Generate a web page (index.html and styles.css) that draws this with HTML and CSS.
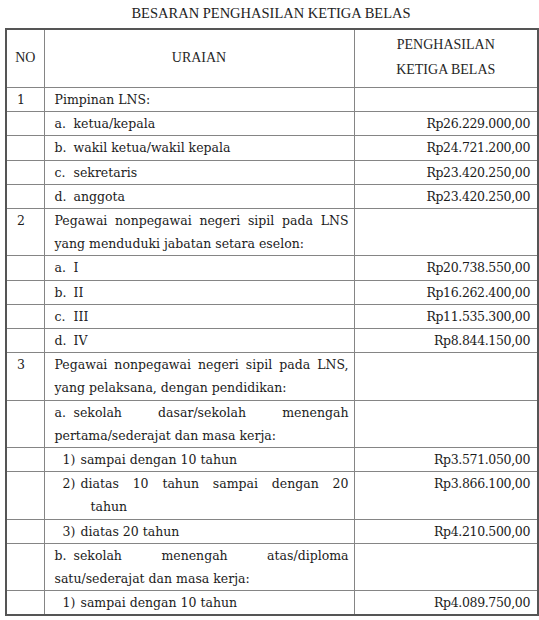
FILE: index.html
```html
<!DOCTYPE html>
<html lang="id">
<head>
<meta charset="utf-8">
<title>Besaran Penghasilan Ketiga Belas</title>
<link rel="stylesheet" href="styles.css">
</head>
<body>
<div class="page">
  <h1 class="title">BESARAN PENGHASILAN KETIGA BELAS</h1>
  <table class="tbl">
    <colgroup><col class="c-no"><col class="c-ur"><col class="c-amt"></colgroup>
    <thead>
      <tr><th class="h-no">NO</th><th class="h-ur">URAIAN</th><th class="h-amt">PENGHASILAN<br>KETIGA BELAS</th></tr>
    </thead>
    <tbody>
      <tr><td class="no">1</td><td class="ur">Pimpinan LNS:</td><td class="amt"></td></tr>
      <tr><td class="no"></td><td class="ur"><span class="mk">a.</span>ketua/kepala</td><td class="amt">Rp26.229.000,00</td></tr>
      <tr><td class="no"></td><td class="ur"><span class="mk">b.</span>wakil ketua/wakil kepala</td><td class="amt">Rp24.721.200,00</td></tr>
      <tr><td class="no"></td><td class="ur"><span class="mk">c.</span>sekretaris</td><td class="amt">Rp23.420.250,00</td></tr>
      <tr><td class="no"></td><td class="ur"><span class="mk">d.</span>anggota</td><td class="amt">Rp23.420.250,00</td></tr>
      <tr><td class="no">2</td><td class="ur"><span class="jl">Pegawai nonpegawai negeri sipil pada LNS</span>yang menduduki jabatan setara eselon:</td><td class="amt"></td></tr>
      <tr><td class="no"></td><td class="ur"><span class="mk">a.</span>I</td><td class="amt">Rp20.738.550,00</td></tr>
      <tr><td class="no"></td><td class="ur"><span class="mk">b.</span>II</td><td class="amt">Rp16.262.400,00</td></tr>
      <tr><td class="no"></td><td class="ur"><span class="mk">c.</span>III</td><td class="amt">Rp11.535.300,00</td></tr>
      <tr><td class="no"></td><td class="ur"><span class="mk">d.</span>IV</td><td class="amt">Rp8.844.150,00</td></tr>
      <tr><td class="no">3</td><td class="ur"><span class="jl">Pegawai nonpegawai negeri sipil pada LNS,</span>yang pelaksana, dengan pendidikan:</td><td class="amt"></td></tr>
      <tr><td class="no"></td><td class="ur"><span class="jl"><span class="mk">a.</span>sekolah dasar/sekolah menengah</span>pertama/sederajat dan masa kerja:</td><td class="amt"></td></tr>
      <tr><td class="no"></td><td class="ur"><div class="sub"><span class="mk2">1)</span>sampai dengan 10 tahun</div></td><td class="amt">Rp3.571.050,00</td></tr>
      <tr><td class="no"></td><td class="ur"><div class="sub"><span class="jl"><span class="mk2">2)</span>diatas 10 tahun sampai dengan 20</span><span class="cont">tahun</span></div></td><td class="amt">Rp3.866.100,00</td></tr>
      <tr><td class="no"></td><td class="ur"><div class="sub"><span class="mk2">3)</span>diatas 20 tahun</div></td><td class="amt">Rp4.210.500,00</td></tr>
      <tr><td class="no"></td><td class="ur"><span class="jl"><span class="mk">b.</span>sekolah menengah atas/diploma</span>satu/sederajat dan masa kerja:</td><td class="amt"></td></tr>
      <tr><td class="no"></td><td class="ur"><div class="sub"><span class="mk2">1)</span>sampai dengan 10 tahun</div></td><td class="amt">Rp4.089.750,00</td></tr>
    </tbody>
  </table>
</div>
</body>
</html>
```

FILE: styles.css
```css
html, body {
  margin: 0;
  padding: 0;
  background: #ffffff;
}

.page {
  padding: 0 0 0 5px;
  color: #1c1c1c;
}

.title {
  margin: 0;
  padding: 4px 0 0 0;
  width: 532px;
  text-align: center;
  font-family: "Liberation Serif", "Times New Roman", serif;
  font-weight: normal;
  font-size: 14.5px;
  line-height: 18px;
  color: #222222;
}

.tbl {
  margin-top: 6px;
  width: 532px;
  table-layout: fixed;
  border-collapse: collapse;
  border: 2px solid #555555;
}

.c-no { width: 38px; }
.c-ur { width: 310px; }
.c-amt { width: 184px; }

.tbl th,
.tbl td {
  border: 1px solid #858585;
  padding: 0;
}

.tbl th {
  font-family: "Liberation Serif", "Times New Roman", serif;
  font-weight: normal;
  font-size: 14px;
  line-height: 25px;
  color: #262626;
  height: 54px;
  padding-bottom: 3px;
  vertical-align: middle;
  text-align: center;
}

.tbl thead tr {
  border-bottom: 1px solid #555555;
}

.tbl td {
  font-family: "DejaVu Serif", serif;
  font-size: 12.5px;
  line-height: 23.2px;
  vertical-align: top;
}

.no {
  padding-left: 10px !important;
}

.ur {
  padding: 0 5px 0 10px !important;
}

.amt {
  text-align: right;
  padding-right: 7px !important;
  letter-spacing: -0.35px;
}

.jl {
  display: block;
  text-align: justify;
  text-align-last: justify;
}

.mk {
  display: inline-block;
  width: 19px;
}

.sub {
  padding-left: 8px;
}

.mk2 {
  display: inline-block;
  width: 18px;
}

.cont {
  display: block;
  padding-left: 28px;
}
```
